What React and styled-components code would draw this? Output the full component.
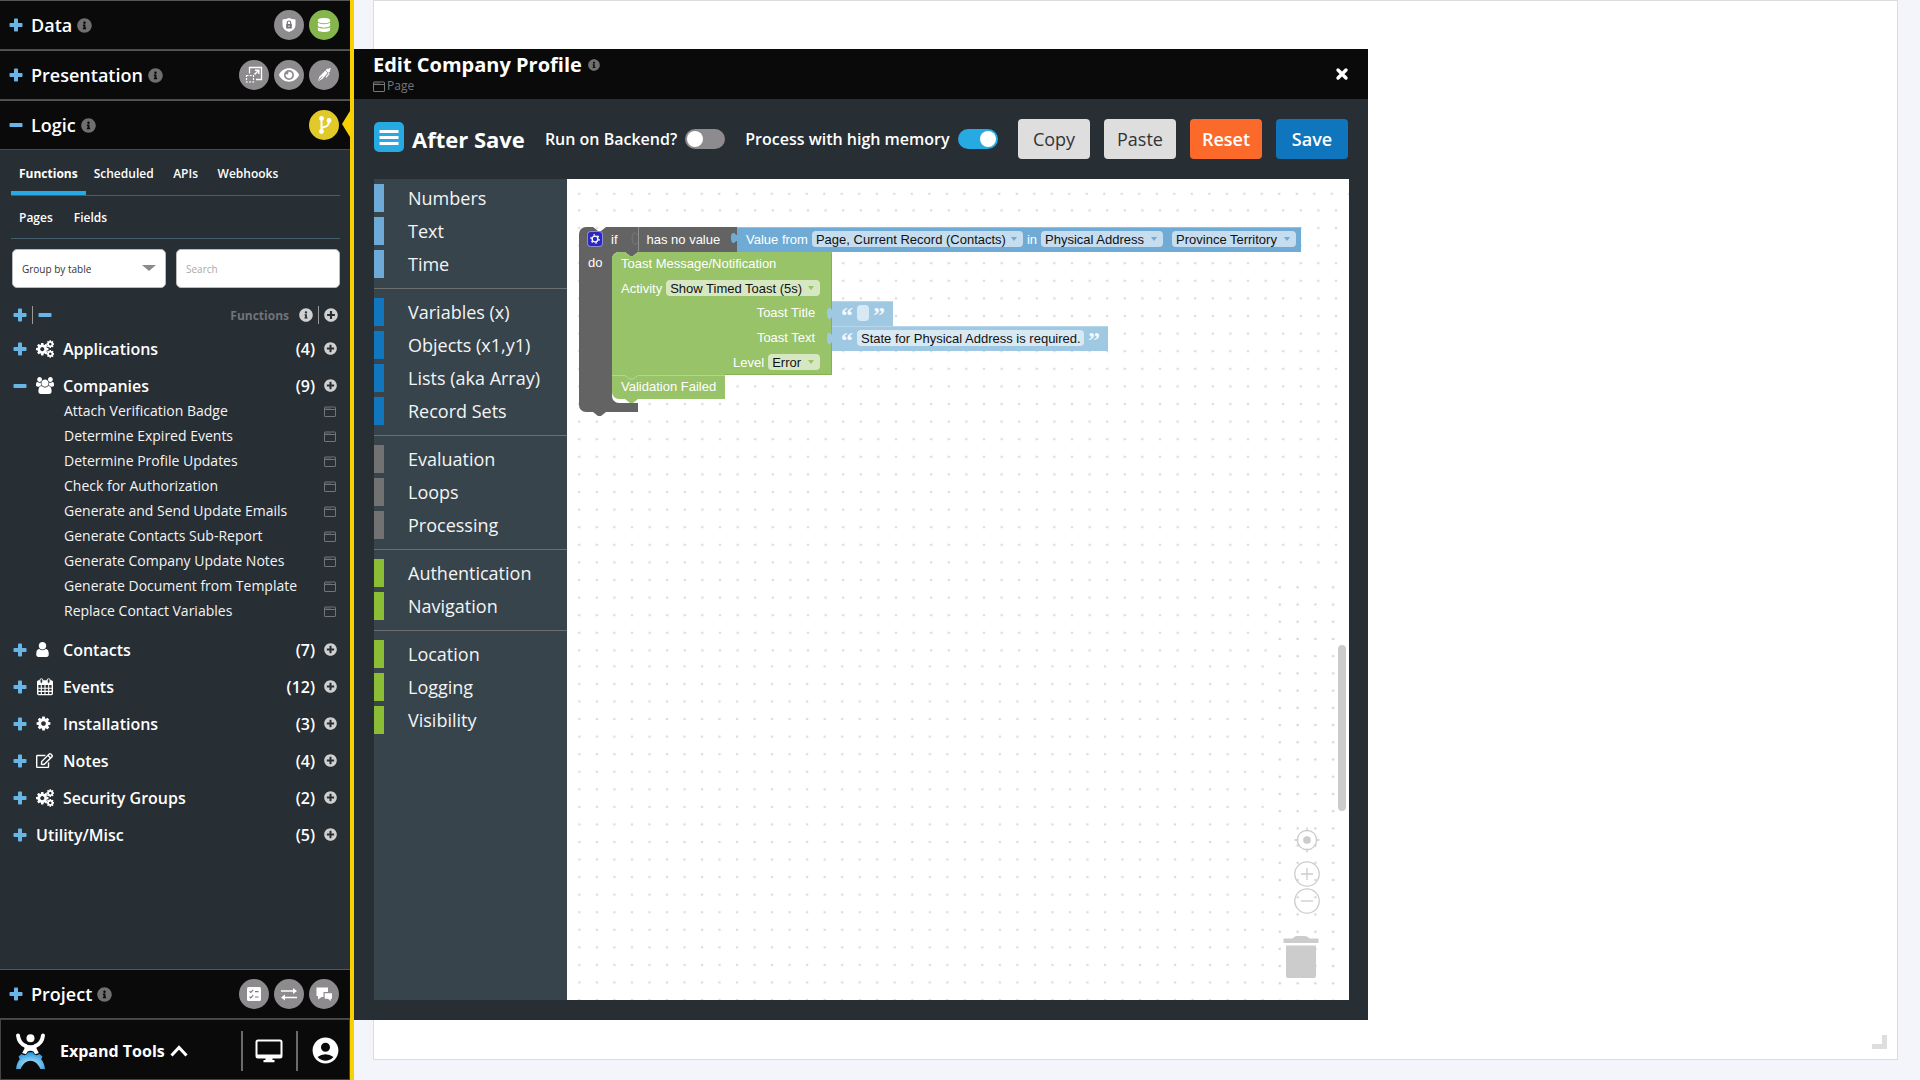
import React, { useState } from "react";
import styled, { createGlobalStyle } from "styled-components";
import {
  FaInfoCircle,
  FaPlusCircle,
  FaRegEdit,
  FaEye,
  FaDatabase,
} from "react-icons/fa";
import { MdAccountCircle } from "react-icons/md";

const GROUPS = [
  { name: "Applications", icon: "cogs", count: 4 },
  {
    name: "Companies",
    icon: "users",
    count: 9,
    items: [
      "Attach Verification Badge",
      "Determine Expired Events",
      "Determine Profile Updates",
      "Check for Authorization",
      "Generate and Send Update Emails",
      "Generate Contacts Sub-Report",
      "Generate Company Update Notes",
      "Generate Document from Template",
      "Replace Contact Variables",
    ],
  },
  { name: "Contacts", icon: "user", count: 7 },
  { name: "Events", icon: "calendar", count: 12 },
  { name: "Installations", icon: "cog", count: 3 },
  { name: "Notes", icon: "edit", count: 4 },
  { name: "Security Groups", icon: "cogs", count: 2 },
  { name: "Utility/Misc", count: 5 },
];

const TOOLBOX = [
  { color: "#6eaad7", items: ["Numbers", "Text", "Time"] },
  {
    color: "#1176bd",
    items: [
      "Variables (x)",
      "Objects (x1,y1)",
      "Lists (aka Array)",
      "Record Sets",
    ],
  },
  { color: "#727272", items: ["Evaluation", "Loops", "Processing"] },
  { color: "#8bbe35", items: ["Authentication", "Navigation"] },
  { color: "#8bbe35", items: ["Location", "Logging", "Visibility"] },
];

const COG =
  "M1152 896q0-106-75-181t-181-75-181 75-75 181 75 181 181 75 181-75 75-181zm512-109v222q0 12-8 23t-20 13l-185 28q-19 54-39 91 35 50 107 138 10 12 10 25t-9 23q-27 37-99 108t-94 71q-12 0-26-9l-138-108q-44 23-91 38-16 136-29 186-7 28-36 28h-222q-14 0-24.5-8.5t-11.5-21.5l-28-184q-49-16-90-37l-141 107q-10 9-25 9-14 0-25-11-126-114-165-168-7-10-7-23 0-12 8-23 15-21 51-66.5t54-70.5q-27-50-41-99l-183-27q-13-2-21-12.5t-8-23.5v-222q0-12 8-23t19-13l186-28q14-46 39-92-40-57-107-138-10-12-10-24 0-10 9-23 26-36 98.5-107.5t94.5-71.5q13 0 26 10l138 107q44-23 91-38 16-136 29-186 7-28 36-28h222q14 0 24.5 8.5t11.5 21.5l28 184q49 16 90 37l142-107q9-9 24-9 13 0 25 10 129 119 165 170 7 8 7 22 0 12-8 23-15 21-51 66.5t-54 70.5q26 50 41 98l183 28q13 2 21 12.5t8 23.5z";

const PlusIcon = () => (
  <svg width="14" height="14" viewBox="0 0 14 14" fill="#69b5e6">
    <rect x="5" y="0.5" width="4" height="13" rx="0.8" />
    <rect x="0.5" y="5" width="13" height="4" rx="0.8" />
  </svg>
);

const MinusIcon = () => (
  <svg width="14" height="14" viewBox="0 0 14 14" fill="#69b5e6">
    <rect x="0.5" y="5" width="13" height="4" rx="0.8" />
  </svg>
);

const CogIcon = () => (
  <svg width="15" height="15" viewBox="64 64 1664 1664" fill="currentColor">
    <path d={COG} />
  </svg>
);

const CogsIcon = () => (
  <svg width="18" height="18" viewBox="0 0 18 18" fill="currentColor">
    <path d={COG} transform="translate(-1 1.9) scale(0.0081)" />
    <path d={COG} transform="translate(9.7 -0.5) scale(0.0051)" />
    <path d={COG} transform="translate(9.7 9.3) scale(0.0051)" />
  </svg>
);

const UsersIcon = () => (
  <svg width="18" height="17" viewBox="-64 0 1920 1792" fill="currentColor">
    <path d="M529 896q-162 5-265 128h-134q-82 0-138-40.5t-56-118.5q0-353 124-353 6 0 43.500 21t97.500 42.500 119 21.500q67 0 133-23-5 37-5 66 0 139 81 256zm1071 637q0 120-73 189.500t-194 69.500h-874q-121 0-194-69.500t-73-189.500q0-53 3.500-103.500t14-109 26.500-108.500 43-97.500 62-81 85.500-53.500 111.500-20q10 0 43 21.500t73 48 107 48 135 21.500 135-21.500 107-48 73-48 43-21.500q61 0 111.500 20t85.500 53.500 62 81 43 97.500 26.500 108.500 14 109 3.500 103.500zm-1024-1277q0 106-75 181t-181 75-181-75-75-181 75-181 181-75 181 75 75 181zm704 384q0 159-112.500 271.500t-271.500 112.500-271.500-112.500-112.500-271.500 112.500-271.500 271.500-112.500 271.500 112.500 112.500 271.500zm576 225q0 78-56 118.500t-138 40.500h-134q-103-123-265-128 81-117 81-256 0-29-5-66 66 23 133 23 59 0 119-21.500t97.500-42.500 43.500-21q124 0 124 353zm-128-609q0 106-75 181t-181 75-181-75-75-181 75-181 181-75 181 75 75 181z" />
  </svg>
);

const UserIcon = () => (
  <svg width="13" height="15" viewBox="256 128 1280 1536" fill="currentColor">
    <path d="M1536 1399q0 109-62.500 187t-150.500 78h-854q-88 0-150.500-78t-62.500-187q0-85 8.500-160.500t31.500-152 58.500-131 94-89 134.500-34.500q131 128 313 128t313-128q76 0 134.500 34.500t94 89 58.500 131 31.500 152 8.500 160.500zm-256-887q0 159-112.500 271.500t-271.500 112.500-271.500-112.500-112.500-271.500 112.500-271.500 271.500-112.500 271.500 112.500 112.500 271.500z" />
  </svg>
);

const CalendarIcon = () => (
  <svg width="18" height="18" viewBox="0 0 18 18" fill="none">
    <rect x="1.7" y="3" width="14.6" height="13.6" rx="1" stroke="#fff" strokeWidth="1.4" />
    <path d="M1.5 3h15v4h-15z" fill="#fff" />
    <path d="M5.3 7v9.500M9 7v9.500M12.700 7v9.500M2 10.200h14M2 13.400h14" stroke="#fff" strokeWidth="1.1" />
    <rect x="4" y="0.8" width="2.8" height="4.4" rx="1.2" fill="#262d33" stroke="#fff" strokeWidth="1" />
    <rect x="11.2" y="0.8" width="2.8" height="4.4" rx="1.2" fill="#262d33" stroke="#fff" strokeWidth="1" />
  </svg>
);

const WindowIcon = ({ color = "#70757a" }) => (
  <svg width="12" height="12" viewBox="0 0 12 12" fill="none" stroke={color}>
    <rect x="0.5" y="2" width="11" height="9.500" rx="0.5" />
    <path d="M0.500 4.500h11" />
    <path d="M1.500 3.200h5" strokeDasharray="1 1" />
  </svg>
);

const ShieldIcon = () => (
  <svg width="16" height="16" viewBox="0 0 16 16">
    <path d="M1.500 2.500Q5 2 8 1q3 1 6.500 1.500V8q0 5-6.500 7Q1.500 13 1.500 8z" fill="#fff" />
    <rect x="5.200" y="7" width="5.600" height="4.500" fill="#767376" />
    <path d="M6.300 7V5.700a1.700 1.700 0 0 1 3.400 0V7" fill="none" stroke="#767376" strokeWidth="1.200" />
    <rect x="7.500" y="8.500" width="1" height="1.500" fill="#fff" />
  </svg>
);

const ResizeIcon = () => (
  <svg width="18" height="18" viewBox="0 0 18 18" fill="none" stroke="#fff">
    <path d="M4.500 7.500V1.500h12v12h-5.500" strokeWidth="1.300" />
    <path d="M9.500 8.500l4-4M10 4.200h3.800V8" strokeWidth="1.500" />
    <rect x="1.500" y="9.500" width="7" height="6.500" strokeWidth="1.200" strokeDasharray="2 1.200" />
  </svg>
);

const PenIcon = () => (
  <svg width="16" height="16" viewBox="0 0 16 16">
    <path d="M1.800 14.500l1.700-5L9.300 3.600l2.400 2.300-5.400 6.200z" fill="#fff" />
    <path d="M9.600 3l2.300-1.600.8.700L14 .8l.9.900-1.100 1.500.6.700-1.900 2.200z" fill="#fff" />
    <path d="M2.300 14l4-4.700" stroke="#8e8b8e" strokeWidth="0.800" />
    <path d="M10 10.300l3.300-3.900" stroke="#fff" strokeWidth="1.100" />
  </svg>
);

const BranchIcon = () => (
  <svg width="16" height="20" viewBox="0 0 16 20" fill="#fff">
    <circle cx="5.500" cy="3.500" r="2.400" />
    <circle cx="5.500" cy="16.500" r="2.400" />
    <circle cx="13" cy="5.500" r="2.400" />
    <path d="M5.500 4v12M13 6c0 5-2.500 5.500-7.500 6.800" fill="none" stroke="#fff" strokeWidth="2" />
  </svg>
);

const ChecklistIcon = () => (
  <svg width="16" height="16" viewBox="0 0 16 16" fill="none">
    <rect x="1" y="1" width="14" height="14" rx="1.500" fill="#fff" />
    <path d="M3.500 5.200l1.300 1.300 2.400-2.700M3.500 10.600l1.300 1.300 2.400-2.700M9 5.600h3.500M9 11h3.500" stroke="#777" strokeWidth="1.100" />
  </svg>
);

const ExchangeIcon = () => (
  <svg width="18" height="14" viewBox="0 0 18 14" fill="none" stroke="#fff" strokeWidth="1.700">
    <path d="M1 4h14M5 10.500h12" />
    <path d="M13 1l4 3-4 3zM5 7.500l-4 3 4 3z" fill="#fff" stroke="none" />
  </svg>
);

const ChatIcon = () => (
  <svg width="18" height="16" viewBox="0 0 18 16" fill="#fff">
    <path d="M1.500 1.500h11.500V6H8.500v5H6.500L3 13.500V10H1.500z" />
    <path d="M9.700 7.200H17v5.600h-1.300V15l-2.700-2.200H9.700z" />
  </svg>
);

const MonitorIcon = () => (
  <svg width="28" height="24" viewBox="0 0 28 24" fill="none">
    <rect x="1.500" y="1.500" width="25" height="17" rx="1.500" stroke="#fff" strokeWidth="2" />
    <path d="M1 15.500h26v3h-26zM10.500 19h7v2h2v2.200h-11V21h2z" fill="#fff" />
  </svg>
);

const ChevronUp = () => (
  <svg width="18" height="12" viewBox="0 0 18 12" fill="none">
    <path d="M1.500 10.500L9 2.500l7.500 8" stroke="#fff" strokeWidth="3" />
  </svg>
);

const LogoIcon = () => (
  <svg width="32" height="38" viewBox="0 0 32 38">
    <defs>
      <radialGradient id="arch" cx="0.5" cy="0.7" r="0.7">
        <stop offset="0.2" stopColor="#9fd4f4" />
        <stop offset="1" stopColor="#1d97dc" />
      </radialGradient>
    </defs>
    <circle cx="15.500" cy="6.300" r="4" fill="#fff" />
    <path d="M3 3.400C3.500 8.500 6.500 12.500 11 14.200M28 3.400C27.500 8.500 24.500 12.500 20 14.200" fill="none" stroke="#fff" strokeWidth="4" strokeLinecap="round" />
    <path d="M9.500 12.300q6 1.700 12 0v4.200l2.300 4.500-3.800 1.300-1.300-2.600q-3.200-2-6.400 0L11 22.300 7.200 21l2.300-4.500z" fill="#fff" />
    <path d="M1 37C1.600 32.500 3 29.500 4.800 27.300L3.600 24.600l2.800-2.500 3 1.200 2.600-1.100.9-1.900h5.200l.9 1.900 2.600 1.100 3-1.200 2.800 2.500-1.200 2.700C28 29.500 29.400 32.500 30 37h-4.600C23 31.500 19.500 28.700 15.500 28.700S8 31.500 5.600 37z" fill="url(#arch)" />
  </svg>
);

const TargetIcon = () => (
  <svg width="26" height="26" viewBox="0 0 26 26" fill="none" stroke="#ccc" strokeWidth="1.300">
    <circle cx="13" cy="13" r="9.700" />
    <circle cx="13" cy="13" r="3.200" fill="#ccc" />
    <path d="M13 0.500v4M13 21.500v4M0.500 13h4M21.500 13h4" />
  </svg>
);

const ZoomIcon = ({ plus }) => (
  <svg width="26" height="26" viewBox="0 0 26 26" fill="none" stroke="#ccc" strokeWidth="1.300">
    <circle cx="13" cy="13" r="12.200" />
    <path d={plus ? "M7 13h12M13 7v12" : "M7 13h12"} />
  </svg>
);

const TrashIcon = () => (
  <svg width="36" height="44" viewBox="0 0 36 44" fill="#ccc">
    <path d="M0.500 3.500H9.500Q11 1 14 1h8Q25 1 26.500 3.500H35.500V8H0.500zM3 10.500H33V41q0 2-2 2H5q-2 0-2-2z" />
  </svg>
);

const CogOutline = () => (
  <svg width="14" height="14" viewBox="0 0 14 14">
    <circle cx="7" cy="7" r="2.900" fill="none" stroke="#fff" strokeWidth="1.400" />
    <circle cx="7" cy="7" r="4.100" fill="none" stroke="#fff" strokeWidth="1.400" strokeDasharray="1.700 2.590" />
  </svg>
);

const groupIcons = {
  cogs: <CogsIcon />,
  users: <UsersIcon />,
  user: <UserIcon />,
  calendar: <CalendarIcon />,
  cog: <CogIcon />,
  edit: <FaRegEdit size={17} />,
};

const Section = ({ title, open, children }) => (
  <SectionBar>
    <IconButton aria-label={`Toggle ${title}`}>
      {open ? <MinusIcon /> : <PlusIcon />}
    </IconButton>
    <SectionTitle>{title}</SectionTitle>
    <FaInfoCircle size={15} color="#6f6f6f" />
    <RoundButtons>{children}</RoundButtons>
  </SectionBar>
);

const Dropdown = ({ label, value, width, arrow }) => (
  <FieldWrap $width={width} $arrow={arrow}>
    <FieldSelect aria-label={label} defaultValue={value}>
      <option>{value}</option>
    </FieldSelect>
  </FieldWrap>
);

const StringBlock = ({ x, y, label, value, width }) => (
  <BlockNode $x={x} $y={y}>
    <Puzzle width="7" height="14" viewBox="0 0 7 14">
      <path d="M7 3.500C5 3.500 6 1 3.500 1S1 3.500 1 7s1 5 2.500 5S5 10 7 10z" fill="#9fc8e2" />
    </Puzzle>
    <ValueRow $color="#9fc8e2" $text>
      <Quote aria-hidden="true">“</Quote>
      <FieldInput aria-label={label} defaultValue={value} $width={width} />
      <Quote aria-hidden="true">”</Quote>
    </ValueRow>
  </BlockNode>
);

const DotGrid = () => (
  <GridSvg aria-hidden="true">
    <defs>
      <pattern id="dotsTop" x="3.500" y="6" width="17.500" height="17.600" patternUnits="userSpaceOnUse">
        <circle cx="8.800" cy="8.800" r="1.300" fill="#dcdcdc" />
      </pattern>
      <pattern id="dots" x="3.400" y="22.600" width="17.600" height="17.600" patternUnits="userSpaceOnUse">
        <circle cx="8.800" cy="8.800" r="1.300" fill="#dcdcdc" />
      </pattern>
      <pattern id="dotsLow" x="3.600" y="478.600" width="17.520" height="17.560" patternUnits="userSpaceOnUse">
        <circle cx="8.800" cy="8.800" r="1.300" fill="#dcdcdc" />
      </pattern>
      <pattern id="dotsSide" x="704" y="399.700" width="17.800" height="17.220" patternUnits="userSpaceOnUse">
        <circle cx="8.800" cy="8.600" r="1.300" fill="#d4d4d4" />
      </pattern>
    </defs>
    <rect width="100%" height="22" fill="url(#dotsTop)" />
    <rect y="22" width="100%" height="372" fill="url(#dots)" />
    <rect y="394" width="704" height="84" fill="url(#dots)" />
    <rect y="478" width="704" height="100%" fill="url(#dotsLow)" />
    <rect x="704" y="394" width="100%" height="100%" fill="url(#dotsSide)" />
  </GridSvg>
);

const App = () => {
  const [backend, setBackend] = useState(false);
  const [memory, setMemory] = useState(true);
  return (
    <Shell>
      <GlobalStyle />
      <Sidebar>
        <Section title="Data">
          <RoundButton aria-label="Security">
            <ShieldIcon />
          </RoundButton>
          <RoundButton aria-label="Database" $color="#86b64b">
            <FaDatabase size={14} />
          </RoundButton>
        </Section>
        <Section title="Presentation">
          <RoundButton aria-label="Layout">
            <ResizeIcon />
          </RoundButton>
          <RoundButton aria-label="Preview">
            <FaEye size={20} />
          </RoundButton>
          <RoundButton aria-label="Design">
            <PenIcon />
          </RoundButton>
        </Section>
        <ActiveSection>
          <Section title="Logic" open>
            <RoundButton aria-label="Functions" $color="#e2c92a">
              <BranchIcon />
            </RoundButton>
          </Section>
          <ActiveArrow />
        </ActiveSection>
        <LogicBody>
          <TabRow>
            <Tab $active>Functions</Tab>
            <Tab>Scheduled</Tab>
            <Tab>APIs</Tab>
            <Tab>Webhooks</Tab>
          </TabRow>
          <TabRow $sub>
            <Tab>Pages</Tab>
            <Tab>Fields</Tab>
          </TabRow>
          <Filters>
            <SelectWrap>
              <GroupSelect aria-label="Group by">
                <option>Group by table</option>
              </GroupSelect>
            </SelectWrap>
            <SearchInput type="search" aria-label="Search" placeholder="Search" />
          </Filters>
          <ListHead>
            <IconButton aria-label="Expand all">
              <PlusIcon />
            </IconButton>
            <ThinLine />
            <IconButton aria-label="Collapse all">
              <MinusIcon />
            </IconButton>
            <ListTitle>Functions</ListTitle>
            <FaInfoCircle size={14} />
            <ThinLine />
            <IconButton aria-label="Add function">
              <FaPlusCircle size={14} />
            </IconButton>
          </ListHead>
          {GROUPS.map((group) => (
            <Group key={group.name}>
              <GroupRow>
                <IconButton aria-label={`Toggle ${group.name}`}>
                  {group.items ? <MinusIcon /> : <PlusIcon />}
                </IconButton>
                {group.icon && <GroupIcon>{groupIcons[group.icon]}</GroupIcon>}
                <GroupName>{group.name}</GroupName>
                <GroupCount>({group.count})</GroupCount>
                <IconButton aria-label={`Add to ${group.name}`}>
                  <FaPlusCircle size={13} />
                </IconButton>
              </GroupRow>
              {group.items && (
                <ItemList>
                  {group.items.map((item) => (
                    <Item key={item}>
                      <ItemLink href="#">{item}</ItemLink>
                      <WindowIcon />
                    </Item>
                  ))}
                </ItemList>
              )}
            </Group>
          ))}
        </LogicBody>
        <Section title="Project">
          <RoundButton aria-label="Tasks">
            <ChecklistIcon />
          </RoundButton>
          <RoundButton aria-label="Transfer">
            <ExchangeIcon />
          </RoundButton>
          <RoundButton aria-label="Comments">
            <ChatIcon />
          </RoundButton>
        </Section>
        <SidebarFooter>
          <LogoIcon />
          <ExpandButton>
            Expand Tools <ChevronUp />
          </ExpandButton>
          <FooterButton aria-label="Display">
            <MonitorIcon />
          </FooterButton>
          <FooterButton aria-label="Account">
            <MdAccountCircle size={31} />
          </FooterButton>
        </SidebarFooter>
      </Sidebar>
      <Stage>
        <PageCard>
          <ResizeCorner />
        </PageCard>
        <Panel>
          <PanelHeader>
            <div>
              <PanelTitle>
                Edit Company Profile <FaInfoCircle size={12} color="#6f6f6f" />
              </PanelTitle>
              <PanelKind>
                <WindowIcon color="#777" /> Page
              </PanelKind>
            </div>
            <IconButton aria-label="Close">
              <svg width="14" height="14" viewBox="0 0 14 14">
                <path d="M3 3l8 8M11 3l-8 8" stroke="#fff" strokeWidth="3.400" strokeLinecap="round" />
              </svg>
            </IconButton>
          </PanelHeader>
          <PanelBody>
            <Toolbar>
              <MenuButton aria-label="Menu">
                <svg width="20" height="18" viewBox="0 0 20 18" fill="#fff">
                  <path d="M0.500 2h19v3h-19zM0.500 8h19v3h-19zM0.500 14h19v3h-19z" />
                </svg>
              </MenuButton>
              <ToolbarTitle>After Save</ToolbarTitle>
              <ToggleLabel>
                Run on Backend?
                <Toggle checked={backend} onChange={() => setBackend(!backend)} />
              </ToggleLabel>
              <ToggleLabel>
                Process with high memory
                <Toggle checked={memory} onChange={() => setMemory(!memory)} />
              </ToggleLabel>
              <Actions>
                <ActionButton>Copy</ActionButton>
                <ActionButton>Paste</ActionButton>
                <ActionButton $color="#fc6a2b">Reset</ActionButton>
                <ActionButton $color="#0f75bd">Save</ActionButton>
              </Actions>
            </Toolbar>
            <Editor>
              <Toolbox>
                {TOOLBOX.map((section) => (
                  <ToolboxSection key={section.items[0]}>
                    {section.items.map((item) => (
                      <Category key={item} $color={section.color}>
                        {item}
                      </Category>
                    ))}
                  </ToolboxSection>
                ))}
              </Toolbox>
              <Workspace>
                <DotGrid />
                <BlockNode $x={12} $y={48}>
                  <BlockShape width="160" height="190" viewBox="0 0 160 190">
                    <path
                      d="M0 7a7 7 0 0 1 7-7H14l5 4h3l5-4H158V25H59l-5 4h-3l-5-4H40a7 7 0 0 0-7 7V169a7 7 0 0 0 7 7H59V185H27l-5 4h-3l-5-4H7a7 7 0 0 1-7-7z"
                      fill="#636363"
                    />
                    <path d="M59.500 0V24.500" stroke="#909090" />
                    <path d="M59 8c-2 0-1.500-2-4-2s-2 8-1 10 4 1 5-1" fill="none" stroke="#7d7d7d" strokeWidth="0.800" />
                    <path d="M158 8c-2 0-1-2-4-2s-2.500 10 0 10 2-2 4-2z" fill="#6fabd5" />
                  </BlockShape>
                  <IfRow>
                    <GearBadge aria-label="Block settings">
                      <CogOutline />
                    </GearBadge>
                    <span>if</span>
                    <Condition>has no value</Condition>
                  </IfRow>
                  <DoLabel>do</DoLabel>
                </BlockNode>
                <BlockNode $x={170} $y={48}>
                  <ValueRow $color="#6fabd5">
                    Value from
                    <Dropdown label="Source" value="Page, Current Record (Contacts)" width={211} arrow="#6fabd5" />
                    in
                    <Dropdown label="Field" value="Physical Address" width={122} arrow="#6fabd5" />
                    <Spacer />
                    <Dropdown label="Part" value="Province Territory" width={124} arrow="#6fabd5" />
                  </ValueRow>
                </BlockNode>
                <BlockNode $x={45} $y={73}>
                  <BlockShape width="222" height="152" viewBox="0 0 222 152">
                    <path d="M0 7a7 7 0 0 1 7-7H13l5 4h3l5-4H220V123H0z" fill="#98c368" />
                    <path d="M0 122H113V147H26l-5 4h-3l-5-4H7a7 7 0 0 1-7-7z" fill="#98c368" />
                    <path d="M0 123.500H13l5 3.500h3l5-3.500H113" fill="none" stroke="#b4d592" />
                    <path d="M219.500 1V122.500H113" fill="none" stroke="#85b257" />
                  </BlockShape>
                  <ToastRows>
                    <ToastRow>Toast Message/Notification</ToastRow>
                    <ToastRow>
                      Activity
                      <Dropdown label="Activity" value="Show Timed Toast (5s)" width={154} arrow="#98c368" />
                    </ToastRow>
                    <ToastRow $end>Toast Title</ToastRow>
                    <ToastRow $end>Toast Text</ToastRow>
                    <ToastRow $end $flush>
                      Level
                      <Dropdown label="Level" value="Error" width={52} arrow="#98c368" />
                    </ToastRow>
                    <ToastRow>Validation Failed</ToastRow>
                  </ToastRows>
                </BlockNode>
                <StringBlock x={265} y={122} label="Toast title" value="" width={12} />
                <StringBlock
                  x={265}
                  y={147}
                  label="Toast text"
                  value="State for Physical Address is required."
                  width={227}
                />
                <ScrollThumb />
                <CanvasControls>
                  <IconButton aria-label="Center">
                    <TargetIcon />
                  </IconButton>
                  <ZoomButtons>
                    <IconButton aria-label="Zoom in">
                      <ZoomIcon plus />
                    </IconButton>
                    <IconButton aria-label="Zoom out">
                      <ZoomIcon />
                    </IconButton>
                  </ZoomButtons>
                  <TrashSlot>
                    <TrashIcon />
                  </TrashSlot>
                </CanvasControls>
              </Workspace>
            </Editor>
          </PanelBody>
        </Panel>
      </Stage>
    </Shell>
  );
};

const GlobalStyle = createGlobalStyle`
  *, *::before, *::after {
    box-sizing: border-box;
  }
  body {
    margin: 0;
    font-family: "Open Sans", sans-serif;
    color: #fff;
    background: #f4f5fa;
  }
  button, input, select {
    font: inherit;
    color: inherit;
    border: 0;
    margin: 0;
    padding: 0;
  }
  button {
    background: none;
    cursor: pointer;
  }
  svg {
    display: block;
    flex: none;
  }
`;

const Shell = styled.div`
  display: flex;
  height: 100vh;
  overflow: hidden;
`;

const Sidebar = styled.aside`
  display: flex;
  flex-direction: column;
  flex: none;
  width: 354px;
  background: #272e34;
  border-right: 4px solid #f9d000;
`;

const SectionBar = styled.header`
  display: flex;
  align-items: center;
  gap: 5px;
  height: 50px;
  padding: 0 11px 0 9px;
  background: #0a0a0a;
  border-top: 1px solid #555;
  border-bottom: 1px solid #4a4a4a;
`;

const SectionTitle = styled.h2`
  margin: 0 0 0 3px;
  font-size: 18px;
  font-weight: 600;
  line-height: 24px;
`;

const RoundButtons = styled.div`
  display: flex;
  gap: 5px;
  margin-left: auto;
`;

const RoundButton = styled.button`
  display: flex;
  align-items: center;
  justify-content: center;
  width: 30px;
  height: 30px;
  border-radius: 50%;
  color: #fff;
  background: ${(props) => props.$color || "#8e8b8e"};
`;

const IconButton = styled.button`
  display: flex;
  align-items: center;
  justify-content: center;
  flex: none;
`;

const ActiveSection = styled.div`
  position: relative;
`;

const ActiveArrow = styled.span`
  position: absolute;
  right: 0;
  top: 11px;
  border: 13px solid transparent;
  border-left: 0;
  border-right: 8px solid #f9d000;
`;

const LogicBody = styled.div`
  flex: 1;
  min-height: 0;
  overflow: hidden;
  padding: 0 10px 0 11px;
`;

const TabRow = styled.nav`
  display: flex;
  gap: ${(props) => (props.$sub ? "5px" : "0")};
  height: ${(props) => (props.$sub ? "43px" : "46px")};
  border-bottom: 1px solid #44606f;
`;

const Tab = styled.button`
  min-width: 48px;
  padding: 5px 8px 0;
  font-size: 12px;
  font-weight: ${(props) => (props.$active ? 700 : 600)};
  border-bottom: 4px solid ${(props) => (props.$active ? "#27a9e1" : "transparent")};
`;

const Filters = styled.div`
  display: flex;
  gap: 10px;
  padding: 10px 0 0 1px;
`;

const SelectWrap = styled.div`
  position: relative;
  width: 154px;
  &::after {
    content: "";
    position: absolute;
    right: 10px;
    top: 16px;
    border: 7px solid transparent;
    border-top: 6px solid #8b8b8b;
    border-bottom: 0;
    pointer-events: none;
  }
`;

const GroupSelect = styled.select`
  appearance: none;
  width: 100%;
  height: 39px;
  padding: 0 9px;
  font-size: 10px;
  color: #333;
  background: #fff;
  border: 1px solid #bbb;
  border-radius: 5px;
`;

const SearchInput = styled.input`
  flex: 1;
  min-width: 0;
  height: 39px;
  padding: 0 9px;
  font-size: 10px;
  color: #333;
  background: #fff;
  border: 1px solid #bbb;
  border-radius: 5px;
  &::placeholder {
    color: #aaa;
  }
`;

const ListHead = styled.div`
  display: flex;
  align-items: center;
  gap: 5px;
  height: 18px;
  margin: 18px 2px 12px;
  color: #d0d0d0;
`;

const ThinLine = styled.span`
  width: 1px;
  height: 18px;
  background: #999;
`;

const ListTitle = styled.span`
  margin: 0 5px 0 auto;
  font-size: 12px;
  font-weight: 700;
  color: #6f7478;
`;

const Group = styled.section`
  margin-bottom: 12px;
`;

const GroupRow = styled.div`
  display: flex;
  align-items: center;
  gap: 9px;
  height: 25px;
  padding: 0 3px 0 2px;
  color: #d0d0d0;
`;

const GroupIcon = styled.span`
  width: 18px;
  color: #fff;
`;

const GroupName = styled.h3`
  margin: 0;
  color: #fff;
  font-size: 16px;
  font-weight: 600;
`;

const GroupCount = styled.span`
  margin-left: auto;
  color: #fff;
  font-size: 16px;
  font-weight: 600;
`;

const ItemList = styled.ul`
  list-style: none;
  margin: 0;
  padding: 0 4px 2px 53px;
`;

const Item = styled.li`
  display: flex;
  align-items: center;
  justify-content: space-between;
  height: 25px;
`;

const ItemLink = styled.a`
  font-size: 14px;
  color: #f4f4f4;
  text-decoration: none;
`;

const SidebarFooter = styled.footer`
  display: flex;
  align-items: center;
  gap: 13px;
  height: 61px;
  padding: 2px 8px 0 14px;
  background: #0a0a0a;
  border: 1px solid #444;
`;

const ExpandButton = styled.button`
  display: flex;
  align-items: center;
  gap: 5px;
  margin-right: auto;
  font-size: 16px;
  font-weight: 700;
`;

const FooterButton = styled.button`
  display: flex;
  align-items: center;
  height: 40px;
  padding-left: 12px;
  color: #fff;
  border-left: 2px solid #6a6a6a;
`;

const Stage = styled.main`
  position: relative;
  display: flex;
  flex: 1;
  min-width: 0;
  padding: 0 22px 20px 19px;
`;

const PageCard = styled.div`
  display: flex;
  flex: 1;
  align-items: flex-end;
  justify-content: flex-end;
  padding: 10px;
  background: #fff;
  border: 1px solid #dcdce0;
`;

const ResizeCorner = styled.span`
  width: 15px;
  height: 14px;
  border: 5px solid #dedede;
  border-top: 0;
  border-left: 0;
`;

const Panel = styled.section`
  position: absolute;
  top: 49px;
  bottom: 60px;
  left: 0;
  display: flex;
  flex-direction: column;
  width: 1014px;
  max-width: 100%;
  background: #272e34;
`;

const PanelHeader = styled.header`
  display: flex;
  align-items: center;
  justify-content: space-between;
  height: 50px;
  padding: 0 19px;
  background: #0a0a0a;
`;

const PanelTitle = styled.h1`
  display: flex;
  align-items: center;
  gap: 6px;
  margin: 0;
  font-size: 20px;
  font-weight: 700;
  line-height: 26px;
`;

const PanelKind = styled.div`
  display: flex;
  align-items: center;
  gap: 2px;
  padding-bottom: 2px;
  font-size: 12px;
  line-height: 16px;
  color: #777;
`;

const PanelBody = styled.div`
  display: flex;
  flex-direction: column;
  flex: 1;
  min-height: 0;
  padding: 20px 19px 20px 20px;
`;

const Toolbar = styled.div`
  display: flex;
  align-items: center;
  height: 40px;
  margin: 0 1px 20px 0;
  white-space: nowrap;
`;

const MenuButton = styled.button`
  display: flex;
  align-items: center;
  justify-content: center;
  flex: none;
  width: 30px;
  height: 30px;
  margin: 0 8px 4px 0;
  background: #27a9e1;
  border-radius: 5px;
`;

const ToolbarTitle = styled.h2`
  margin: 0 20px 0 0;
  font-size: 22px;
  font-weight: 700;
`;

const ToggleLabel = styled.label`
  display: flex;
  align-items: center;
  gap: 8px;
  margin-right: 20px;
  font-size: 16px;
  font-weight: 600;
`;

const Toggle = styled.input.attrs({ type: "checkbox", role: "switch" })`
  appearance: none;
  flex: none;
  width: 40px;
  height: 20px;
  padding: 2px;
  border-radius: 10px;
  background: #8e8b8e;
  cursor: pointer;
  &::before {
    content: "";
    display: block;
    width: 16px;
    height: 16px;
    border-radius: 50%;
    background: #fff;
  }
  &:checked {
    background: #27a9e1;
  }
  &:checked::before {
    margin-left: auto;
  }
`;

const Actions = styled.div`
  display: flex;
  gap: 14px;
  margin-left: auto;
`;

const ActionButton = styled.button`
  width: 72px;
  height: 40px;
  font-size: 18px;
  font-weight: ${(props) => (props.$color ? 600 : 500)};
  color: ${(props) => (props.$color ? "#fff" : "#333")};
  background: ${(props) => props.$color || "#dedede"};
  border-radius: 4px;
`;

const Editor = styled.div`
  display: flex;
  flex: 1;
  min-height: 0;
`;

const Toolbox = styled.nav`
  flex: none;
  width: 193px;
  background: #37444c;
`;

const ToolboxSection = styled.div`
  display: flex;
  flex-direction: column;
  gap: 5px;
  padding: 9px 0 10px;
  & + & {
    border-top: 1px solid #6a6f72;
  }
  &:first-child {
    padding-top: 5px;
  }
`;

const Category = styled.button`
  height: 28px;
  padding-left: 24px;
  font-size: 18px;
  line-height: 28px;
  text-align: left;
  color: #f4f4f4;
  border-left: 10px solid ${(props) => props.$color};
`;

const Workspace = styled.div`
  position: relative;
  flex: 1;
  overflow: hidden;
  background: #fff;
  font: 13px "Liberation Sans", Arial, sans-serif;
`;

const GridSvg = styled.svg`
  width: 100%;
  height: 100%;
`;

/* blocks sit at their own place on the free canvas */
const BlockNode = styled.div`
  position: absolute;
  left: ${(props) => props.$x}px;
  top: ${(props) => props.$y}px;
  white-space: nowrap;
`;

const BlockShape = styled.svg`
  position: absolute;
  top: 0;
  left: 0;
`;

const Puzzle = styled.svg`
  position: absolute;
  top: 6px;
  left: -6px;
`;

const ValueRow = styled.div`
  display: flex;
  align-items: center;
  gap: 4px;
  height: 25px;
  padding: 0 ${(props) => (props.$text ? "8px" : "5px")} 1px 9px;
  background: ${(props) => props.$color};
  box-shadow: inset 0 1px 0 rgba(255, 255, 255, 0.25);
`;

const Spacer = styled.span`
  width: 1px;
`;

const IfRow = styled.div`
  position: relative;
  display: flex;
  align-items: center;
  gap: 9px;
  height: 24px;
  padding-left: 9px;
`;

const Condition = styled.span`
  margin-left: 20px;
`;

const DoLabel = styled.div`
  position: relative;
  padding: 4px 9px;
`;

const GearBadge = styled.button`
  width: 14px;
  height: 14px;
  background: #2a27c4;
  border-radius: 3px;
  box-shadow: 0 0 0 1px #8d8ccc;
`;

const ToastRows = styled.div`
  position: relative;
  display: grid;
  grid-template-rows: 24px 25px 24px 25px 25px 24px;
  width: 220px;
`;

const ToastRow = styled.div`
  display: flex;
  align-items: center;
  justify-content: ${(props) => (props.$end ? "flex-end" : "flex-start")};
  gap: 4px;
  padding: 0 ${(props) => (props.$end && !props.$flush ? "17px" : "12px")} 1px 9px;
`;

const FieldWrap = styled.span`
  position: relative;
  width: ${(props) => props.$width}px;
  height: 16px;
  &::after {
    content: "";
    position: absolute;
    right: 6px;
    top: 6px;
    border: 3px solid transparent;
    border-top: 4px solid ${(props) => props.$arrow};
    border-bottom: 0;
    pointer-events: none;
  }
`;

const FieldSelect = styled.select`
  display: block;
  appearance: none;
  width: 100%;
  height: 16px;
  padding: 0 4px;
  color: #111;
  background: rgba(255, 255, 255, 0.6);
  border-radius: 4px;
`;

const FieldInput = styled.input`
  width: ${(props) => props.$width}px;
  height: 16px;
  padding: 0 4px;
  color: #111;
  background: rgba(255, 255, 255, 0.6);
  border-radius: 4px;
`;

const Quote = styled.span`
  width: 12px;
  height: 16px;
  font: 700 24px/20px "Liberation Serif", serif;
  color: #f4f9fc;
`;

const ScrollThumb = styled.div`
  position: absolute;
  right: 3px;
  top: 466px;
  width: 8px;
  height: 166px;
  border-radius: 4px;
  background: #ccc;
`;

const CanvasControls = styled.div`
  position: absolute;
  right: 29px;
  bottom: 21px;
  display: flex;
  flex-direction: column;
  align-items: flex-end;
`;

const ZoomButtons = styled.div`
  display: flex;
  flex-direction: column;
  gap: 1px;
  margin: 8px 0 21px;
`;

const TrashSlot = styled.div`
  padding-right: 1px;
`;

export default App;
